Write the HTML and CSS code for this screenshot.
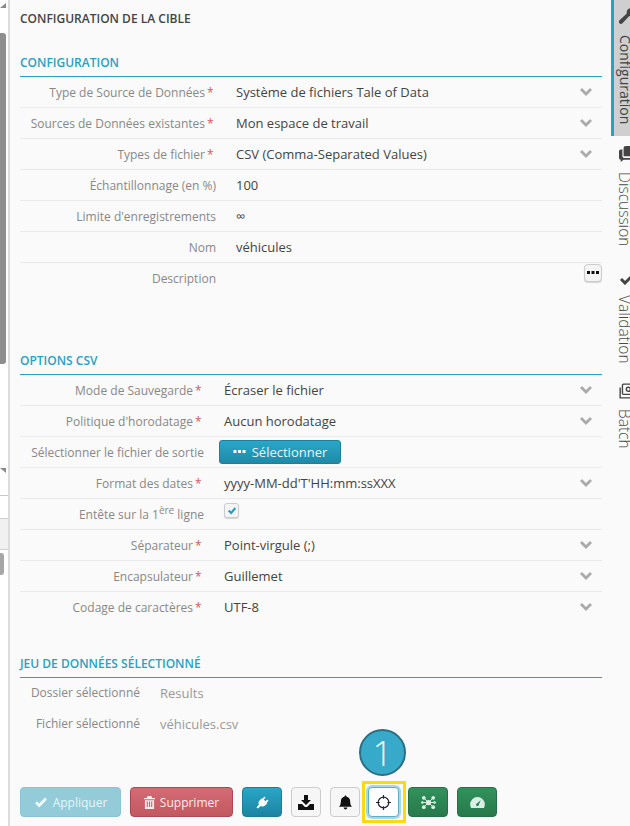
FILE: index.html
```html
<!DOCTYPE html>
<html lang="fr">
<head>
<meta charset="utf-8">
<title>Configuration de la cible</title>
<link rel="stylesheet" href="styles.css">
</head>
<body>
<div class="app">
  <aside class="strip">
    <div class="arrow-up"></div>
    <div class="thumb-a"></div>
    <div class="arrow-down"></div>
    <div class="strip-white"></div>
    <div class="strip-head"></div>
    <div class="thumb-b"></div>
  </aside>
  <main class="panel">
    <h1 class="page-title">CONFIGURATION DE LA CIBLE</h1>

    <section class="sec sec-config">
      <h2 class="sec-title">CONFIGURATION</h2>
      <div class="row"><label class="lbl">Type de Source de Données<i class="req">*</i></label><span class="val">Système de fichiers Tale of Data</span><svg class="chev" viewBox="0 0 14 10"><path d="M2 2l5 5 5-5" /></svg></div>
      <div class="row"><label class="lbl">Sources de Données existantes<i class="req">*</i></label><span class="val">Mon espace de travail</span><svg class="chev" viewBox="0 0 14 10"><path d="M2 2l5 5 5-5" /></svg></div>
      <div class="row"><label class="lbl">Types de fichier<i class="req">*</i></label><span class="val">CSV (Comma-Separated Values)</span><svg class="chev" viewBox="0 0 14 10"><path d="M2 2l5 5 5-5" /></svg></div>
      <div class="row"><label class="lbl plain">Échantillonnage (en %)</label><span class="val">100</span></div>
      <div class="row"><label class="lbl plain">Limite d'enregistrements</label><span class="val">∞</span></div>
      <div class="row"><label class="lbl plain">Nom</label><span class="val">véhicules</span></div>
      <div class="row row-desc"><label class="lbl plain">Description</label><span class="val"></span>
        <button class="more" type="button"><svg viewBox="0 0 12 4"><path d="M0 0h3v3H0zM4.5 0h3v3h-3zM9 0h3v3H9z"/></svg></button>
      </div>
    </section>

    <section class="sec sec-csv">
      <h2 class="sec-title">OPTIONS CSV</h2>
      <div class="row"><label class="lbl">Mode de Sauvegarde<i class="req">*</i></label><span class="val">Écraser le fichier</span><svg class="chev" viewBox="0 0 14 10"><path d="M2 2l5 5 5-5" /></svg></div>
      <div class="row"><label class="lbl">Politique d'horodatage<i class="req">*</i></label><span class="val">Aucun horodatage</span><svg class="chev" viewBox="0 0 14 10"><path d="M2 2l5 5 5-5" /></svg></div>
      <div class="row"><label class="lbl plain">Sélectionner le fichier de sortie</label>
        <button class="btn-select" type="button"><svg viewBox="0 0 12 4"><path d="M0 0h3v3H0zM4.5 0h3v3h-3zM9 0h3v3H9z"/></svg>Sélectionner</button></div>
      <div class="row"><label class="lbl">Format des dates<i class="req">*</i></label><span class="val">yyyy-MM-dd'T'HH:mm:ssXXX</span><svg class="chev" viewBox="0 0 14 10"><path d="M2 2l5 5 5-5" /></svg></div>
      <div class="row"><label class="lbl plain">Entête sur la 1<sup>ère</sup> ligne</label><span class="check"><svg viewBox="0 0 12 10"><path d="M2 5l3 3 5-6" /></svg></span></div>
      <div class="row"><label class="lbl">Séparateur<i class="req">*</i></label><span class="val">Point-virgule (;)</span><svg class="chev" viewBox="0 0 14 10"><path d="M2 2l5 5 5-5" /></svg></div>
      <div class="row"><label class="lbl">Encapsulateur<i class="req">*</i></label><span class="val">Guillemet</span><svg class="chev" viewBox="0 0 14 10"><path d="M2 2l5 5 5-5" /></svg></div>
      <div class="row row-last"><label class="lbl">Codage de caractères<i class="req">*</i></label><span class="val">UTF-8</span><svg class="chev" viewBox="0 0 14 10"><path d="M2 2l5 5 5-5" /></svg></div>
    </section>

    <section class="sec sec-data">
      <h2 class="sec-title">JEU DE DONNÉES SÉLECTIONNÉ</h2>
      <div class="row row-last"><label class="lbl plain">Dossier sélectionné</label><span class="val muted">Results</span></div>
      <div class="row row-last"><label class="lbl plain">Fichier sélectionné</label><span class="val muted">véhicules.csv</span></div>
    </section>

    <div class="toolbar">
      <button class="tb tb-apply" type="button"><svg class="ic" viewBox="0 0 14 12"><path d="M2 6.200l3.200 3.200L12 2.600" class="ck"/></svg>Appliquer</button>
      <button class="tb tb-del" type="button"><svg class="ic" viewBox="0 0 12 14"><path d="M4 0h4l1 2h3v1.500H0V2h3zM1 4.500h10V14H1zM3 6v6h1.200V6zM5.400 6v6h1.200V6zM7.800 6v6H9V6z" fill-rule="evenodd"/></svg>Supprimer</button>
      <button class="tb tb-plug" type="button"><svg class="ic" viewBox="0 0 14 14"><path d="M9 .5l1.300 1.300L8.300 3.800l1.900 1.900 2-2L13.500 5l-2 2 .7.700-2.500 2.500c-1.400 1.300-3.200 1.500-4.700.6L2 13.500.5 12l2.700-2.500c-.9-1.500-.7-3.300.6-4.700l2.500-2.500.7.700z"/></svg></button>
      <button class="tb tb-light" type="button"><svg class="ic" viewBox="0 0 16 15"><path d="M6 0h4v5h3L8 10 3 5h3zM0 9h4l3 3h2l3-3h4v6H0z"/></svg></button>
      <button class="tb tb-light tb-bell" type="button"><svg class="ic" viewBox="0 0 14 15"><path d="M7 0c.7 0 1.100.5 1.100 1.200C10.500 1.700 12 3.500 12 6c0 3.500.7 4.800 2 6H0c1.300-1.200 2-2.500 2-6 0-2.500 1.500-4.300 3.900-4.800C5.900.5 6.300 0 7 0zM5 13h4c0 1.100-.9 2-2 2s-2-.9-2-2z"/></svg></button>
      <span class="focus-wrap">
        <button class="tb tb-light tb-focus" type="button"><svg class="ic" viewBox="0 0 14 14"><circle cx="7" cy="7" r="5"/><path d="M7 0v3.500M7 10.500V14M0 7h3.500M10.500 7H14"/></svg></button>
        <span class="badge">1</span>
      </span>
      <button class="tb tb-green" type="button"><svg class="ic" viewBox="0 0 16 16"><path d="M8 8L3 3M8 8l5-5M8 8L3 13M8 8l5 5M8 8H1.500M8 8h6.500" class="net"/><circle cx="8" cy="8" r="2.800"/><circle cx="3" cy="3" r="2"/><circle cx="13" cy="3" r="2"/><circle cx="3" cy="13" r="2"/><circle cx="13" cy="13" r="2"/><circle cx="1.500" cy="8" r="1.400"/><circle cx="14.500" cy="8" r="1.400"/></svg></button>
      <button class="tb tb-green tb-gauge" type="button"><svg class="ic" viewBox="0 0 16 12"><path d="M8 0a8 8 0 0 1 8 8c0 1.500-.4 2.900-1 4H1c-.6-1.100-1-2.500-1-4a8 8 0 0 1 8-8zM11.500 3.500L7.300 7a1.500 1.500 0 1 0 2 1.700z" fill-rule="evenodd"/></svg></button>
    </div>
  </main>
  <nav class="tabs">
    <div class="tab active"><svg class="tab-ic" viewBox="0 0 14 14"><path d="M13.500 3.200c.4 2-1.200 4-3.300 4-.4 0-.8-.1-1.200-.2l-6 6.300c-.7.800-1.900.8-2.600.1-.7-.7-.7-1.900.1-2.600l6.300-6c-.6-2.300 1.200-4.600 3.700-4.600.5 0 .9.100 1.300.2L9.800 2.900v2h2l1.700-1.700z"/></svg><span>Configuration</span></div>
    <div class="tab tab-disc"><svg class="tab-ic" viewBox="0 0 14 14"><path d="M6 0h6a2 2 0 0 1 2 2v5a2 2 0 0 1-2 2H5a2 2 0 0 1-1-.3V2a2 2 0 0 1 2-2zM1.500 3H3v6a1.500 1.500 0 0 0 1.500 1.500H10V11a1 1 0 0 1-1 1H4l-2.500 2v-2A1.500 1.500 0 0 1 0 10.500v-6A1.500 1.500 0 0 1 1.500 3z"/></svg><span>Discussion</span></div>
    <div class="tab tab-valid"><svg class="tab-ic tab-ck" viewBox="0 0 16 12"><path d="M2 6l4 4 8-8"/></svg><span>Validation</span></div>
    <div class="tab tab-batch"><svg class="tab-ic" viewBox="0 0 14 14"><rect x="3" y="1" width="10.500" height="9" rx="1"/><path d="M1 4v9h9"/><circle cx="8.200" cy="5.500" r="1.800"/></svg><span>Batch</span></div>
  </nav>
</div>
</body>
</html>
```
FILE: styles.css
```css
* { box-sizing: border-box; }
html, body { margin: 0; height: 100%; overflow: hidden; background: #fafafa; }
body { font-family: "Open Sans", "Liberation Sans", sans-serif; color: #444; font-size: 12px; }

.app { display: flex; width: 630px; height: 826px; }

.strip {
  width: 10px; flex: none; background: #fff;
  border-right: 2px solid #dcdcdc;
  display: flex; flex-direction: column;
}
.arrow-up { width: 0; height: 0; margin: 3px 0 0 0; border-left: 6px solid transparent; border-right: 0; border-bottom: 5px solid #8a8a8a; }
.thumb-a { width: 6px; height: 331px; margin-top: 25px; background: #8e8e8e; border-radius: 0 3px 3px 0; }
.arrow-down { width: 0; height: 0; margin-top: 104px; border-right: 6px solid transparent; border-top: 5px solid #8a8a8a; transform: scaleX(-1); margin-left: 0; }
.strip-white { height: 23px; margin-top: 22px; border-top: 1px solid #c9c9c9; background: #fff; }
.strip-head { height: 32px; background: #f1f1f1; border-top: 1px solid #d0d0d0; border-bottom: 1px solid #d0d0d0; margin-top: 0; }
.thumb-b { width: 4px; height: 22px; margin-top: 3px; background: #a6a6a6; border-radius: 0 3px 3px 0; }

.panel { width: 601px; flex: none; padding: 10px 9px 0 10px; background: #fafafa; display: flex; flex-direction: column; }
.page-title { margin: 0; font-size: 12px; line-height: 17px; font-weight: 600; color: #444; }

.sec-title {
  margin: 0; font-size: 12px; line-height: 17px; font-weight: 600; color: #29a1c2;
  padding-bottom: 5px; border-bottom: 1px solid #29a1c2;
}
.sec-config { margin-top: 27px; }
.sec-csv { margin-top: 6px; }
.sec-data { margin-top: 32px; }

.row {
  display: flex; align-items: center; height: 31px;
  border-bottom: 1px solid #e9e9e9; position: relative; padding-bottom: 1px;
}
.row-last { border-bottom: 0; }
.row-desc { height: 83px; border-bottom: 0; align-items: flex-start; padding-top: 6px; }
.lbl { flex: none; text-align: right; color: #888; font-size: 12px; line-height: 16px; margin-top: 2px; padding-right: 4px; white-space: nowrap; }
.lbl.plain { padding-right: 0; }
.req { font-style: normal; color: #d9575f; margin-left: 2px; display: inline-block; width: 5px; text-align: left; }
.sec-config .lbl { width: 196px; }
.sec-config .val, .sec-config .check { margin-left: 20px; }
.sec-csv .lbl { width: 184px; }
.sec-csv .val, .sec-csv .check { margin-left: 20px; }
.sec-data .lbl { width: 120px; margin-top: 0; }
.sec-data .val { margin-left: 20px; }
.lbl sup { font-size: 10px; line-height: 0; }
.val { flex: 1; font-size: 13px; line-height: 18px; color: #444; white-space: nowrap; }
.val.muted { color: #999; }
.chev { width: 14px; height: 10px; flex: none; margin-right: 9px; fill: none; stroke: #aaa; stroke-width: 2.800; }

.more {
  position: absolute; right: 0; top: 1px; width: 18px; height: 18px; padding: 0;
  background: #f4f4f4; border: 1px solid #ccc; border-radius: 4px;
  box-shadow: 0 1px 1px rgba(0,0,0,.15); display: flex; align-items: center; justify-content: center;
}
.more svg { width: 12px; height: 4px; fill: #111; }

.btn-select {
  margin-left: 15px; width: 122px; height: 24px; padding: 0; border-radius: 3px;
  border: 1px solid #1d7f9a; background: linear-gradient(#2aa6c7, #1f8aa8);
  color: #e6f5f9; font: 13px "Open Sans", sans-serif; display: flex; align-items: center; justify-content: center;
}
.btn-select svg { width: 13px; height: 4px; fill: #fff; margin-right: 6px; }

.check {
  width: 15px; height: 15px; margin-bottom: 6px; background: #f5f5f5; border: 1px solid #ccc; border-radius: 3px;
  box-shadow: 0 1px 1px rgba(0,0,0,.15); display: flex; align-items: center; justify-content: center;
}
.check svg { width: 10px; height: 9px; fill: none; stroke: #1f9cc0; stroke-width: 2.400; }

.toolbar { display: flex; align-items: center; margin-top: 47px; height: 30px; }
.tb {
  height: 30px; padding: 0; border-radius: 4px; border: 1px solid; display: flex; align-items: center; justify-content: center;
  font: 12px "Open Sans", sans-serif; flex: none;
}
.ic { flex: none; }
.tb-apply { width: 101px; background: #93cbd9; border-color: #8cc4d3; color: #e8f5f8; }
.tb-apply .ic { width: 14px; height: 12px; margin-right: 5px; }
.ck { fill: none; stroke: #f1f9fb; stroke-width: 2.800; }
.tb-del { width: 103px; margin-left: 9px; background: linear-gradient(#d46c75, #c25860); border-color: #a94850; color: #fbeaea; }
.tb-del .ic { width: 11px; height: 13px; margin-right: 5px; fill: #fbeaea; }
.tb-plug { width: 40px; margin-left: 9px; background: linear-gradient(#2aa6c7, #1c84a2); border-color: #1b7d98; }
.tb-plug .ic { width: 13px; height: 13px; fill: #fff; }
.tb-light { width: 30px; margin-left: 9px; background: #f6f6f6; border-color: #ccc; }
.tb-light .ic { width: 16px; height: 15px; fill: #111; }
.tb-bell .ic { width: 13px; height: 15px; }

.focus-wrap { position: relative; display: flex; margin-left: 8px; }
.tb-focus {
  margin-left: 0; width: 31px; border: 1px solid #5aaecb; background: #fff;
  box-shadow: 0 0 0 2px #a7d8e6;
}
.focus-wrap::after {
  content: ""; box-sizing: border-box; position: absolute; left: -6px; top: -6px; width: 44px; height: 42px;
  border: 3px solid #ffd90f; pointer-events: none;
}
.tb-focus .ic { width: 15px; height: 15px; fill: none; stroke: #223; stroke-width: 1.100; }
.badge {
  position: absolute; left: -9px; top: -58px; width: 47px; height: 47px; border-radius: 50%;
  background: #37a9c9; border: 2px solid #2c6f84; color: #f2fafc;
  font: 300 35px/43px "Open Sans", sans-serif; text-align: center;
}
.tb-green { width: 40px; margin-left: 9px; background: linear-gradient(#31925c, #27794b); border-color: #246f45; }
.tb-green .ic { width: 15px; height: 15px; fill: #d9efe4; }
.net { stroke: #d9efe4; stroke-width: 1; fill: none; }
.tb-gauge .ic { width: 15px; height: 11px; }

.tabs { flex: 1; display: flex; flex-direction: column; overflow: hidden; min-width: 0; }
.tab {
  display: flex; flex-direction: column; align-items: flex-start; padding-left: 8px;
  color: #4a4a4a; font-size: 15.5px; font-weight: 300;
}
.tab span { writing-mode: vertical-rl; line-height: 12px; white-space: nowrap; margin-top: 10px; }
.tab-ic { width: 16px; height: 16px; flex: none; fill: #444; }
.tab.active { height: 136px; background: #cfcfcf; border-left: 3px solid #29a1c2; padding-left: 5px; padding-top: 8px; margin-bottom: 10px; font-size: 14px; font-weight: 400; color: #444; }
.tab.active span { margin-top: 11px; }
.tab-valid { margin-top: 27px; }
.tab-ck { fill: none; stroke: #444; stroke-width: 3; height: 12px; }
.tab-batch { margin-top: 19px; }
.tab-batch .tab-ic { fill: none; stroke: #444; stroke-width: 1.200; }
```
